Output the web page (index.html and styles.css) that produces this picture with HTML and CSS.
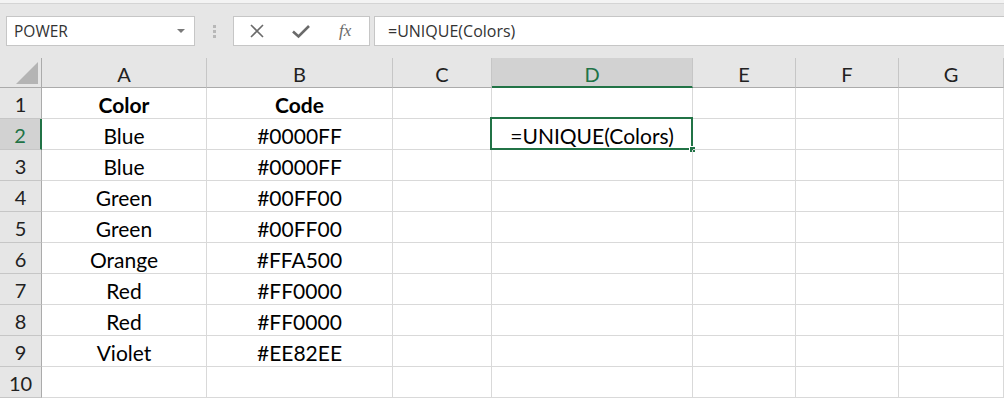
FILE: index.html
```html
<!DOCTYPE html>
<html>
<head>
<meta charset="utf-8">
<link rel="stylesheet" href="styles.css">
</head>
<body>
<div class="top-strip"></div>
<div class="fbar">
  <div class="namebox">
    <span class="nb-text">POWER</span>
    <span class="nb-arrow"></span>
  </div>
  <div class="grip"><i></i><i></i><i></i></div>
  <div class="fbtns">
    <svg class="ico" width="16" height="16" viewBox="0 0 16 16"><path d="M2 2 L14 14 M14 2 L2 14" stroke="#6a6a6a" stroke-width="1.6" fill="none"/></svg>
    <svg class="ico" width="20" height="16" viewBox="0 0 20 16"><path d="M2 8.5 L7.5 13.5 L18 3" stroke="#6a6a6a" stroke-width="2.6" fill="none"/></svg>
    <span class="fx">fx</span>
  </div>
  <div class="finput">=UNIQUE(Colors)</div>
</div>
<div class="sheet">
  <div class="hd corner"><span class="tri"></span></div>
  <div class="hd col">A</div>
  <div class="hd col">B</div>
  <div class="hd col">C</div>
  <div class="hd col sel">D</div>
  <div class="hd col">E</div>
  <div class="hd col">F</div>
  <div class="hd col">G</div>

  <div class="hd row">1</div><div class="c b">Color</div><div class="c b">Code</div><div class="c"></div><div class="c"></div><div class="c"></div><div class="c"></div><div class="c"></div>
  <div class="hd row sel">2</div><div class="c">Blue</div><div class="c">#0000FF</div><div class="c"></div><div class="c active">=UNIQUE(Colors)<span class="handle"></span></div><div class="c"></div><div class="c"></div><div class="c"></div>
  <div class="hd row">3</div><div class="c">Blue</div><div class="c">#0000FF</div><div class="c"></div><div class="c"></div><div class="c"></div><div class="c"></div><div class="c"></div>
  <div class="hd row">4</div><div class="c">Green</div><div class="c">#00FF00</div><div class="c"></div><div class="c"></div><div class="c"></div><div class="c"></div><div class="c"></div>
  <div class="hd row">5</div><div class="c">Green</div><div class="c">#00FF00</div><div class="c"></div><div class="c"></div><div class="c"></div><div class="c"></div><div class="c"></div>
  <div class="hd row">6</div><div class="c">Orange</div><div class="c">#FFA500</div><div class="c"></div><div class="c"></div><div class="c"></div><div class="c"></div><div class="c"></div>
  <div class="hd row">7</div><div class="c">Red</div><div class="c">#FF0000</div><div class="c"></div><div class="c"></div><div class="c"></div><div class="c"></div><div class="c"></div>
  <div class="hd row">8</div><div class="c">Red</div><div class="c">#FF0000</div><div class="c"></div><div class="c"></div><div class="c"></div><div class="c"></div><div class="c"></div>
  <div class="hd row">9</div><div class="c">Violet</div><div class="c">#EE82EE</div><div class="c"></div><div class="c"></div><div class="c"></div><div class="c"></div><div class="c"></div>
  <div class="hd row">10</div><div class="c"></div><div class="c"></div><div class="c"></div><div class="c"></div><div class="c"></div><div class="c"></div><div class="c"></div>
</div>
</body>
</html>
```

FILE: styles.css
```css
* { box-sizing: border-box; }
html, body { margin: 0; padding: 0; }
body {
  width: 1004px;
  height: 402px;
  overflow: hidden;
  background: #ffffff;
  font-family: Lato, "Open Sans", sans-serif;
}
.top-strip {
  height: 4px;
  background: #f3f3f3;
  border-bottom: 1px solid #d4d4d4;
}
.fbar {
  height: 54px;
  background: #e6e6e6;
  display: flex;
  align-items: flex-start;
  padding-top: 12px;
  padding-left: 6px;
}
.namebox {
  width: 189px;
  height: 30px;
  background: #fff;
  border: 1px solid #c6c6c6;
  display: flex;
  align-items: center;
  justify-content: space-between;
  padding: 0 9px 0 7px;
  font-family: "Open Sans", "Noto Sans", sans-serif;
  font-size: 15.5px;
  color: #333;
}
.nb-arrow {
  width: 0; height: 0;
  border-left: 4px solid transparent;
  border-right: 4px solid transparent;
  border-top: 4px solid #7a7a7a;
}
.grip {
  width: 38px;
  height: 30px;
  display: flex;
  flex-direction: column;
  align-items: center;
  justify-content: center;
  gap: 2px;
}
.grip i {
  display: block;
  width: 3px;
  height: 3px;
  background: #b8b8b8;
}
.fbtns {
  width: 137px;
  height: 30px;
  background: #fff;
  border: 1px solid #c6c6c6;
  display: flex;
  align-items: center;
  padding-left: 15px;
  gap: 26px;
}
.fx {
  font-family: "Liberation Serif", serif;
  font-style: italic;
  font-size: 17px;
  color: #6a6a6a;
  margin-left: 2px;
}
.finput {
  flex: 1;
  margin-left: 4px;
  height: 30px;
  background: #fff;
  border: 1px solid #c6c6c6;
  border-right: none;
  display: flex;
  align-items: center;
  padding-left: 13px;
  font-family: "Open Sans", "Noto Sans", sans-serif;
  font-size: 16px;
  color: #333;
}
.sheet {
  display: grid;
  grid-template-columns: 42px 165px 186px 99px 201px 103px 103px 1fr;
  grid-template-rows: 30px repeat(10, 31px);
}
.hd {
  background: #e6e6e6;
  color: #222;
  font-size: 20px;
  display: flex;
  align-items: center;
  justify-content: center;
  padding-top: 2px;
}
.hd.col {
  border-right: 1px solid #c6c6c6;
  border-bottom: 1px solid #ababab;
}
.hd.corner {
  border-right: 1px solid #ababab;
  border-bottom: 1px solid #ababab;
  align-items: flex-end;
  justify-content: flex-end;
  padding: 0 3px 3px 0;
}
.tri {
  width: 0; height: 0;
  border-left: 22px solid transparent;
  border-bottom: 22px solid #b4b4b4;
}
.hd.row {
  border-right: 1px solid #ababab;
  border-bottom: 1px solid #c6c6c6;
}
.hd.col.sel {
  background: #d2d2d2;
  color: #217346;
  border-bottom: 2px solid #217346;
  padding-top: 3px;
}
.hd.row.sel {
  background: #d2d2d2;
  color: #217346;
  border-right: 2px solid #217346;
}
.c {
  border-right: 1px solid #d9d9d9;
  border-bottom: 1px solid #d9d9d9;
  font-size: 21px;
  color: #000;
  display: flex;
  align-items: center;
  justify-content: center;
  padding-top: 3px;
  position: relative;
}
.c.b { font-weight: bold; }
.c.active::before {
  content: "";
  position: absolute;
  left: -2px;
  top: -2px;
  right: -1px;
  bottom: -1px;
  border: 2px solid #217346;
}
.handle {
  position: absolute;
  right: -3px;
  bottom: -3px;
  width: 6px;
  height: 6px;
  background: #217346;
  border: 1px solid #fff;
  border-right: none;
  border-bottom: none;
}
```
